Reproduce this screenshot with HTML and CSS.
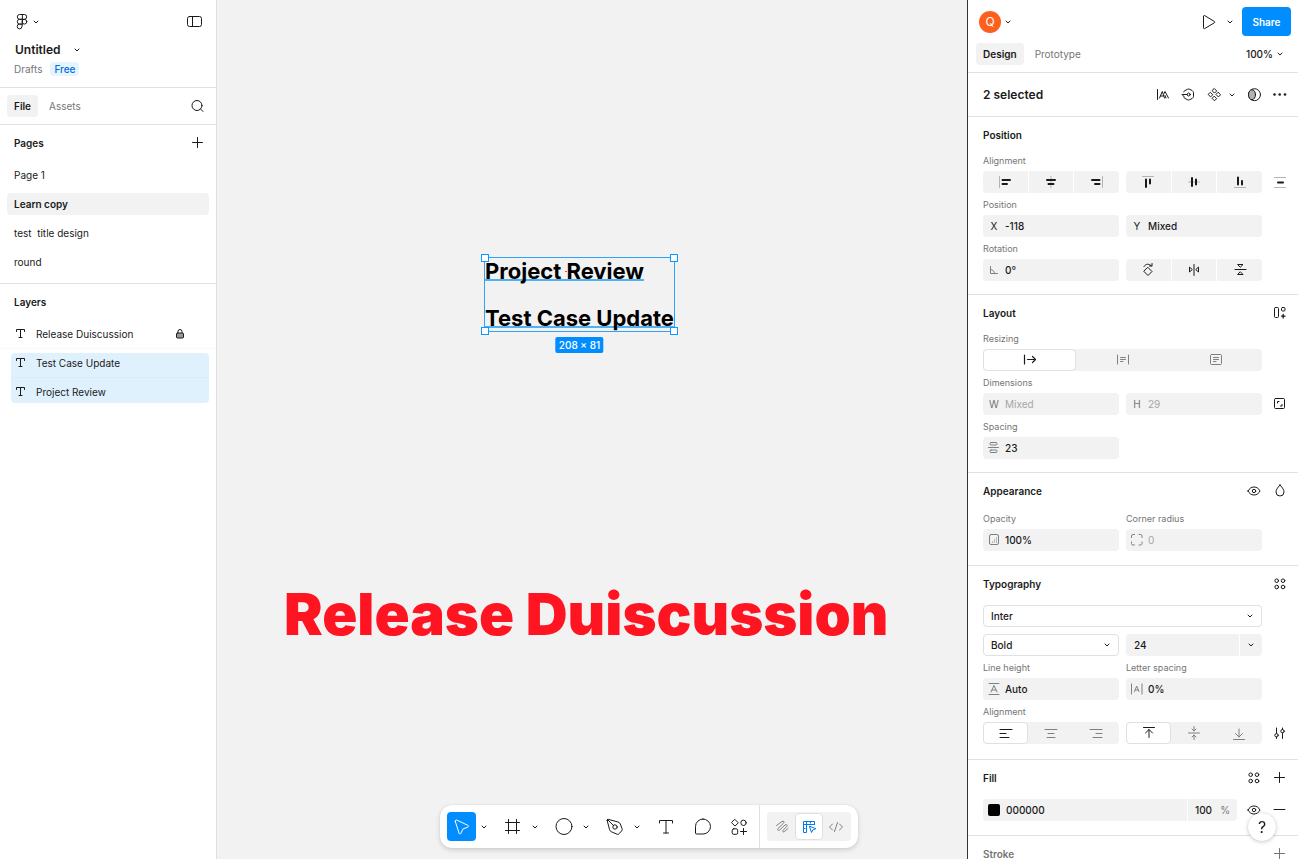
FILE: index.html
```html
<!DOCTYPE html>
<html lang="en">
<head>
  <meta charset="UTF-8" />
  <meta name="viewport" content="width=device-width, initial-scale=1.0" />
  <title>Untitled – Figma</title>
  <link rel="stylesheet" href="styles.css">
</head>
<body>
  <svg class="sprite" aria-hidden="true">
    <symbol id="chevron" viewBox="0 0 8 8"><path d="M2 3l2 2 2-2" stroke-width="1"/></symbol>
    <symbol id="plus" viewBox="0 0 20 20"><path d="M4.500 9.500h10M9.500 4.500v10"/></symbol>
    <symbol id="minus" viewBox="0 0 20 20"><path d="M4 9.500h11"/></symbol>
    <symbol id="eye" viewBox="0 0 20 20"><path d="M4 10c1.200-2.500 3.400-4 6-4s4.800 1.500 6 4c-1.200 2.500-3.400 4-6 4s-4.800-1.500-6-4z"/><circle cx="10" cy="10" r="1.700"/></symbol>
    <symbol id="dots4" viewBox="0 0 20 20"><circle cx="6.700" cy="6.700" r="1.800"/><circle cx="13" cy="6.700" r="1.800"/><circle cx="6.700" cy="13" r="1.800"/><circle cx="13" cy="13" r="1.800"/></symbol>
    <symbol id="text" viewBox="0 0 20 20"><path d="M6.500 7.500v-2h8v2M10.500 5.500v8M9 13.500h3"/></symbol>
  </svg>

  <div class="app">
    <aside class="left">
      <header class="file-head">
        <div class="bar">
          <button class="menu" aria-label="Main menu">
            <svg class="icon" viewBox="0 0 20 20"><path d="M10 2.500H7.700a2.400 2.400 0 0 0 0 4.800H10zM10 2.500h2.300a2.400 2.400 0 0 1 0 4.800H10M10 7.300H7.700a2.400 2.400 0 0 0 0 4.800H10zM10 12.100H7.700a2.400 2.400 0 1 0 2.300 2.400z"/><circle cx="12.400" cy="9.700" r="2.400"/></svg>
            <svg class="chev"><use href="#chevron"/></svg>
          </button>
          <button class="icon-btn" aria-label="Minimize UI">
            <svg class="icon" viewBox="0 0 20 20"><rect x="2.500" y="4.500" width="14" height="10" rx="2"/><path d="M7.500 4.500v10"/></svg>
          </button>
        </div>
        <button class="file-name">Untitled <svg class="chev"><use href="#chevron"/></svg></button>
        <div class="location"><a href="#">Drafts</a><span class="badge">Free</span></div>
      </header>

      <nav class="tabs left-tabs">
        <button class="tab active">File</button>
        <button class="tab">Assets</button>
        <button class="icon-btn push" aria-label="Search">
          <svg class="icon" viewBox="0 0 20 20"><circle cx="10" cy="9.500" r="5"/><path d="M13.600 13.100l2.400 2.400"/></svg>
        </button>
      </nav>

      <section class="pages">
        <div class="list-head">
          <h2>Pages</h2>
          <button class="icon-btn" aria-label="Add page"><svg class="icon"><use href="#plus"/></svg></button>
        </div>
        <ul class="page-list">
          <li>Page 1</li>
          <li class="current">Learn copy</li>
          <li>test&nbsp; title design</li>
          <li>round</li>
        </ul>
      </section>

      <section class="layers">
        <div class="list-head"><h2>Layers</h2></div>
        <ul class="layer-list">
          <li>
            <svg class="icon"><use href="#text"/></svg>Release Duiscussion
            <svg class="icon lock" viewBox="0 0 20 20"><path d="M8 9V7.500a2 2 0 0 1 4 0V9"/><rect x="6.500" y="9" width="7" height="5" rx="1" fill="#999"/></svg>
          </li>
          <li class="selected"><svg class="icon"><use href="#text"/></svg>Test Case Update</li>
          <li class="selected"><svg class="icon"><use href="#text"/></svg>Project Review</li>
        </ul>
      </section>
    </aside>

    <main class="canvas">
      <div class="selection">
        <p class="layer-text"><span>Project Review</span></p>
        <p class="layer-text"><span>Test Case Update</span></p>
        <i class="handle tl"></i><i class="handle tr"></i><i class="handle bl"></i><i class="handle br"></i>
        <span class="size">208 × 81</span>
      </div>
      <p class="headline">Release Duiscussion</p>
    </main>

    <aside class="right">
      <header class="right-head">
        <div class="bar">
          <button class="account" aria-label="Account">
            <span class="avatar">Q</span>
            <svg class="chev"><use href="#chevron"/></svg>
          </button>
          <button class="icon-btn push" aria-label="Present">
            <svg class="icon" viewBox="0 0 20 20"><path d="M4.500 4.300v11.600c0 .7.600 1 1.200.7l9.800-5.900c.5-.3.5-.9 0-1.200L5.700 3.600c-.6-.3-1.200 0-1.200.7z"/></svg>
          </button>
          <button class="chev-btn present-opt" aria-label="Present options"><svg class="chev"><use href="#chevron"/></svg></button>
          <button class="share">Share</button>
        </div>
        <div class="tabs">
          <button class="tab active">Design</button>
          <button class="tab">Prototype</button>
          <button class="zoom push">100% <svg class="chev"><use href="#chevron"/></svg></button>
        </div>
      </header>

      <div class="selected-bar">
        <h1>2 selected</h1>
        <button class="icon-btn" aria-label="Edit text">
          <svg class="icon" viewBox="0 0 20 20"><path d="M5.500 4.500v10M7.500 13l2.800-6.500 2.200 6.500M8.500 11h3M12 8.500l1-2 3.500 6.500M13 10.500l1 2.500"/></svg>
        </button>
        <button class="icon-btn" aria-label="Reset instance">
          <svg class="icon" viewBox="0 0 20 20"><path d="M5.500 7c.3-.6.800-1 1.300-1.300l2.500-1.400c.8-.4 1.700-.4 2.500 0l2.500 1.400c.8.500 1.200 1.200 1.200 2v3.600c0 .8-.4 1.500-1.200 2l-2.500 1.400c-.8.4-1.700.4-2.500 0l-2.500-1.400c-.5-.3-.9-.7-1.100-1.300M4.500 9.500h4.500M6 11.500l-2-2"/><circle cx="10.700" cy="9.500" r="1.500"/></svg>
        </button>
        <div class="split">
          <button class="icon-btn" aria-label="Create component">
            <svg class="icon" viewBox="0 0 20 20"><path d="M10.500 3.700l2.200 2.200-2.200 2.200-2.200-2.200zM6.600 7.500l2.200 2.200-2.200 2.200-2.200-2.200zM14.400 7.500l2.200 2.200-2.200 2.200-2.200-2.200zM10.500 11.400l2.200 2.200-2.200 2.200-2.200-2.200z"/></svg>
          </button>
          <button class="chev-btn" aria-label="Component options"><svg class="chev"><use href="#chevron"/></svg></button>
        </div>
        <button class="icon-btn" aria-label="Use as mask">
          <svg class="icon" viewBox="0 0 20 20"><circle cx="10.500" cy="9.700" r="6"/><ellipse cx="8" cy="9.700" rx="3.500" ry="5" fill="#b3b3b3"/></svg>
        </button>
        <button class="icon-btn" aria-label="More">
          <svg class="icon solid" viewBox="0 0 20 20"><circle cx="4.500" cy="9.500" r="1.300"/><circle cx="9.700" cy="9.500" r="1.300"/><circle cx="15" cy="9.500" r="1.300"/></svg>
        </button>
      </div>

      <section class="panel compact">
        <div class="panel-head"><h2>Position</h2></div>
        <div class="grid">
          <div class="group">
            <span class="caption">Alignment</span>
            <div class="btn-group">
              <button aria-label="Align left"><svg class="icon thick" viewBox="0 0 20 20"><path class="faint" d="M4.500 4.500v11"/><path d="M7.500 8H15M7.500 12H12"/></svg></button>
              <button aria-label="Align horizontal centers"><svg class="icon thick" viewBox="0 0 20 20"><path class="faint" d="M10 4.500v11"/><path d="M6 8h8M7.500 12h5"/></svg></button>
              <button aria-label="Align right"><svg class="icon thick" viewBox="0 0 20 20"><path class="faint" d="M15.500 4.500v11"/><path d="M5 8h7.500M8 12h4.500"/></svg></button>
            </div>
          </div>
          <div class="group">
            <div class="btn-group">
              <button aria-label="Align top"><svg class="icon thick" viewBox="0 0 20 20"><path class="faint" d="M4.500 4.500h11"/><path d="M8 7.500v7.500M12 7.500v4"/></svg></button>
              <button aria-label="Align vertical centers"><svg class="icon thick" viewBox="0 0 20 20"><path class="faint" d="M4.500 10h11"/><path d="M8 6v8M12 7.500v5"/></svg></button>
              <button aria-label="Align bottom"><svg class="icon thick" viewBox="0 0 20 20"><path class="faint" d="M4.500 15.500h11"/><path d="M8 5.500v7M12 9v3.500"/></svg></button>
            </div>
          </div>
          <button class="icon-btn" aria-label="Distribute">
            <svg class="icon thick" viewBox="0 0 20 20"><path class="faint" d="M4.500 5.500h11M4.500 15.500h11"/><path d="M8 10.500h5"/></svg>
          </button>

          <div class="group">
            <label class="caption" for="x">Position</label>
            <div class="field"><span class="prefix">X</span><input id="x" type="text" value="-118"></div>
          </div>
          <div class="group">
            <div class="field"><span class="prefix">Y</span><input aria-label="Y position" type="text" value="Mixed"></div>
          </div>
          <span></span>

          <div class="group">
            <label class="caption" for="rotation">Rotation</label>
            <div class="field">
              <svg class="icon muted" viewBox="0 0 20 20"><path d="M6.500 6.500v7h7M6.500 9.500c2.200 0 4 1.800 4 4"/></svg>
              <input id="rotation" type="text" value="0°">
            </div>
          </div>
          <div class="group">
            <div class="btn-group">
              <button aria-label="Rotate 90° right"><svg class="icon" viewBox="0 0 20 20"><path d="M10 7.500l4 4-4 4-4-4zM6 6.500c1.500-3 5.500-3 7.500-.5M14 3.500V6h-2.500"/></svg></button>
              <button aria-label="Flip horizontal"><svg class="icon" viewBox="0 0 20 20"><path d="M10 4.500v11M5.500 7.500v4.500L8 9.800zM14.500 7.500v4.500L12 9.800z"/></svg></button>
              <button aria-label="Flip vertical"><svg class="icon" viewBox="0 0 20 20"><path d="M5 9.500h11M8 4.500h5L10.500 7zM8 14.500h5L10.500 12z"/></svg></button>
            </div>
          </div>
        </div>
      </section>

      <section class="panel compact">
        <div class="panel-head">
          <h2>Layout</h2>
          <button class="icon-btn" aria-label="Use auto layout">
            <svg class="icon" viewBox="0 0 20 20"><rect x="4.500" y="4.500" width="4" height="10" rx="1"/><rect x="11.500" y="4.500" width="3.500" height="3.500" rx="1"/><path d="M13.200 11.500v3.500M11.500 13.200H15" stroke-width="1.300"/></svg>
          </button>
        </div>
        <div class="grid">
          <div class="group span2">
            <span class="caption">Resizing</span>
            <div class="segments">
              <label><input type="radio" name="resize" aria-label="Auto width" checked><svg class="icon" viewBox="0 0 20 20"><path d="M4.500 5v9M7.500 9.500h8M12.500 6.500l3 3-3 3" stroke-width="1.200"/></svg></label>
              <label><input type="radio" name="resize" aria-label="Auto height"><svg class="icon" viewBox="0 0 20 20"><path d="M4.500 5v9M15.500 5v9M7.500 7.500h5M7.500 9.500h5M7.500 11.500H10"/></svg></label>
              <label><input type="radio" name="resize" aria-label="Fixed size"><svg class="icon" viewBox="0 0 20 20"><rect x="4.500" y="4.500" width="11" height="10" rx="1"/><path d="M7.500 7.500h5M7.500 9.500h5M7.500 11.500H10"/></svg></label>
            </div>
          </div>
          <span></span>

          <div class="group">
            <label class="caption" for="width">Dimensions</label>
            <div class="field off"><span class="prefix">W</span><input id="width" type="text" value="Mixed"></div>
          </div>
          <div class="group">
            <div class="field off"><span class="prefix">H</span><input aria-label="Height" type="text" value="29"></div>
          </div>
          <button class="icon-btn" aria-label="Lock aspect ratio">
            <svg class="icon" viewBox="0 0 20 20"><rect x="4.500" y="4.500" width="10" height="10" rx="1"/><path d="M7.500 9V7.500H9M12 10.500V12h-1.500"/></svg>
          </button>

          <div class="group">
            <label class="caption" for="spacing">Spacing</label>
            <div class="field">
              <svg class="icon muted" viewBox="0 0 20 20"><path d="M4.500 9.500h10"/><rect x="6" y="4.500" width="7" height="2.500" rx="1"/><rect x="6" y="12" width="7" height="2.500" rx="1"/></svg>
              <input id="spacing" type="text" value="23">
            </div>
          </div>
        </div>
      </section>

      <section class="panel appearance">
        <div class="panel-head">
          <h2>Appearance</h2>
          <button class="icon-btn" aria-label="Toggle visibility"><svg class="icon"><use href="#eye"/></svg></button>
          <button class="icon-btn" aria-label="Blend mode">
            <svg class="icon" viewBox="0 0 20 20"><path d="M10 4c2.500 2.800 4 4.900 4 7a4 4 0 0 1-8 0c0-2.100 1.500-4.200 4-7z"/></svg>
          </button>
        </div>
        <div class="grid">
          <div class="group">
            <label class="caption" for="opacity">Opacity</label>
            <div class="field">
              <svg class="icon muted" viewBox="0 0 20 20"><rect x="5.500" y="4.500" width="9" height="10" rx="1.500"/><path d="M12.500 7.500v5M10.500 9.500v3M8.500 11.500v1" stroke-dasharray="1 1" stroke-linecap="butt"/></svg>
              <input id="opacity" type="text" value="100%">
            </div>
          </div>
          <div class="group">
            <label class="caption" for="radius">Corner radius</label>
            <div class="field off">
              <svg class="icon muted" viewBox="0 0 20 20"><path d="M4.500 7.500V6A1.500 1.500 0 0 1 6 4.500H7.500M12 4.500h1.500A1.500 1.500 0 0 1 15 6V7.500M15 12v1.500a1.500 1.500 0 0 1-1.500 1.500H12M7.500 15H6A1.500 1.500 0 0 1 4.500 13.500V12"/></svg>
              <input id="radius" type="text" value="0">
            </div>
          </div>
        </div>
      </section>

      <section class="panel typography">
        <div class="panel-head">
          <h2>Typography</h2>
          <button class="icon-btn" aria-label="Apply text styles"><svg class="icon"><use href="#dots4"/></svg></button>
        </div>
        <div class="grid">
          <div class="select span2">
            <select aria-label="Font family"><option>Inter</option></select>
            <svg class="chev"><use href="#chevron"/></svg>
          </div>
          <span></span>
          <div class="select">
            <select aria-label="Font style"><option>Bold</option></select>
            <svg class="chev"><use href="#chevron"/></svg>
          </div>
          <div class="combo">
            <div class="field"><input aria-label="Font size" type="text" value="24"></div>
            <button class="chev-btn" aria-label="Font sizes"><svg class="chev"><use href="#chevron"/></svg></button>
          </div>
          <span></span>

          <div class="group">
            <label class="caption" for="line-height">Line height</label>
            <div class="field">
              <svg class="icon muted" viewBox="0 0 20 20"><path d="M5 4.500h10M5 15.500h10M7 13l3-6.500 3 6.500M8 11h4"/></svg>
              <input id="line-height" type="text" value="Auto">
            </div>
          </div>
          <div class="group">
            <label class="caption" for="letter-spacing">Letter spacing</label>
            <div class="field">
              <svg class="icon muted" viewBox="0 0 20 20"><path d="M4.500 5v10M15 5v10M7.500 12.500l2.200-5.500 2.300 5.500M8.500 11h2.500"/></svg>
              <input id="letter-spacing" type="text" value="0%">
            </div>
          </div>
          <span></span>

          <div class="group">
            <span class="caption">Alignment</span>
            <div class="segments">
              <label><input type="radio" name="halign" aria-label="Text align left" checked><svg class="icon" viewBox="0 0 20 20"><path d="M4 6.500h12M4 10.500h6M4 14.500h9"/></svg></label>
              <label><input type="radio" name="halign" aria-label="Text align center"><svg class="icon" viewBox="0 0 20 20"><path d="M4 6.500h12M7 10.500h6M6 14.500h8"/></svg></label>
              <label><input type="radio" name="halign" aria-label="Text align right"><svg class="icon" viewBox="0 0 20 20"><path d="M4 6.500h12M10 10.500h6M7 14.500h9"/></svg></label>
            </div>
          </div>
          <div class="group">
            <div class="segments">
              <label><input type="radio" name="valign" aria-label="Align top" checked><svg class="icon" viewBox="0 0 20 20"><path d="M4.500 4.500h11M10 14.500V6.500M6.500 10L10 6.500l3.500 3.500"/></svg></label>
              <label><input type="radio" name="valign" aria-label="Align middle"><svg class="icon" viewBox="0 0 20 20"><path d="M4.500 10h11M10 3.500v4.500M8 6l2 2 2-2M10 16.500V12M8 14l2-2 2 2"/></svg></label>
              <label><input type="radio" name="valign" aria-label="Align bottom"><svg class="icon" viewBox="0 0 20 20"><path d="M4.500 16.500h11M10 6v8M6.500 10.500L10 14l3.500-3.500"/></svg></label>
            </div>
          </div>
          <button class="icon-btn" aria-label="Type settings">
            <svg class="icon" viewBox="0 0 20 20"><path d="M6.500 5v5.500M6.500 14v1.500M12.500 15.500v-5.500M12.500 6.500V5"/><circle cx="6.500" cy="12.300" r="1.700"/><circle cx="12.500" cy="8.200" r="1.700"/></svg>
          </button>
        </div>
      </section>

      <section class="panel">
        <div class="panel-head">
          <h2>Fill</h2>
          <button class="icon-btn" aria-label="Apply styles"><svg class="icon"><use href="#dots4"/></svg></button>
          <button class="icon-btn" aria-label="Add fill"><svg class="icon"><use href="#plus"/></svg></button>
        </div>
        <div class="fill-row">
          <div class="combo">
            <div class="field"><span class="swatch"></span><input aria-label="Fill color" type="text" value="000000"></div>
            <div class="field percent"><input aria-label="Fill opacity" type="text" value="100"><span>%</span></div>
          </div>
          <button class="icon-btn" aria-label="Toggle fill"><svg class="icon"><use href="#eye"/></svg></button>
          <button class="icon-btn" aria-label="Remove fill"><svg class="icon"><use href="#minus"/></svg></button>
        </div>
      </section>

      <section class="panel empty">
        <div class="panel-head">
          <h2>Stroke</h2>
          <button class="icon-btn" aria-label="Add stroke"><svg class="icon"><use href="#plus"/></svg></button>
        </div>
      </section>
    </aside>
  </div>

  <div class="toolbar">
    <div class="tools">
      <div class="split">
        <button class="tool on" aria-label="Move"><svg class="tool-icon" viewBox="0 0 24 24"><path d="M5.300 6.500l3.900 12c.3.800 1.300.8 1.600.1l2.100-4.600 5-1.900c.8-.3.900-1.300.1-1.700L6.600 5c-.8-.4-1.600.5-1.300 1.500z"/></svg></button>
        <button class="chev-btn" aria-label="Move tools"><svg class="chev"><use href="#chevron"/></svg></button>
      </div>
      <div class="split">
        <button class="tool" aria-label="Frame"><svg class="tool-icon" viewBox="0 0 24 24"><path d="M7.500 4.500v14M15.500 4.500v14M4.500 7.500h14M4.500 15.500h14"/></svg></button>
        <button class="chev-btn" aria-label="Region tools"><svg class="chev"><use href="#chevron"/></svg></button>
      </div>
      <div class="split">
        <button class="tool" aria-label="Ellipse"><svg class="tool-icon" viewBox="0 0 24 24"><circle cx="12" cy="11.500" r="8"/></svg></button>
        <button class="chev-btn" aria-label="Shape tools"><svg class="chev"><use href="#chevron"/></svg></button>
      </div>
      <div class="split">
        <button class="tool" aria-label="Pen"><svg class="tool-icon" viewBox="0 0 24 24"><path d="M4.200 5.500l2.300 9c.3 1.200 1 2 2.200 2.400l5.300 2.300c1 .4 1.500.2 2-.4l2.700-3c.6-.7.700-1.200.4-2l-1.800-4.800c-.4-1-1.200-1.700-2.300-2L5.200 4.300c-.8-.2-1.200.4-1 1.200zM4.500 4.500l6 6"/><circle cx="12" cy="12" r="2.200"/></svg></button>
        <button class="chev-btn" aria-label="Drawing tools"><svg class="chev"><use href="#chevron"/></svg></button>
      </div>
      <button class="tool" aria-label="Text"><svg class="tool-icon" viewBox="0 0 24 24"><path d="M5.500 8V5.500h13V8M12 5.500v12.500M9.500 18h5"/></svg></button>
      <button class="tool" aria-label="Comment"><svg class="tool-icon" viewBox="0 0 24 24"><path d="M13 4a7.500 7.500 0 1 1 0 15H6.500a1 1 0 0 1-1-1v-6.500A7.500 7.500 0 0 1 13 4z"/></svg></button>
      <button class="tool" aria-label="Actions"><svg class="tool-icon" viewBox="0 0 24 24"><path d="M9 4.500l3.300 3.300L9 11.100 5.700 7.800zM17.500 13.500v6M14.500 16.500h6"/><circle cx="17.500" cy="7.800" r="2.700"/><rect x="6.200" y="13.800" width="5.500" height="5.500" rx="1.500"/></svg></button>
    </div>
    <div class="modes">
      <div class="mode-group">
        <label><input type="radio" name="mode" aria-label="Draw"><svg class="icon" viewBox="0 0 20 20"><path d="M4.500 8.500l5.500-4c1.700-1 2.800.5 1.500 1.700L6 11.500c-1.200 1.400.3 2.600 1.700 1.400L13 8c1.500-1.200 2.800.3 1.700 1.600L11 13.300c-1 1.300.3 2.200 1.500 1.200l3.500-3"/></svg></label>
        <label><input type="radio" name="mode" aria-label="Design" checked><svg class="icon" viewBox="0 0 20 20"><path d="M15.500 7.500V4.500h-11v11h3v-8h8M4.500 7.500h3v-3M4.500 11.500H6M11.500 4.500V6"/><path d="M10.500 9.500l2 6 1.300-2.600 2.700-1.100z"/></svg></label>
        <label><input type="radio" name="mode" aria-label="Dev Mode"><svg class="icon" viewBox="0 0 20 20"><path d="M6.500 7l-3 3 3 3M13.500 7l3 3-3 3M11.500 5.500l-3 9"/></svg></label>
      </div>
    </div>
  </div>

  <button class="help" aria-label="Help">?</button>
</body>
</html>
```
FILE: styles.css
```css
* {
  box-sizing: border-box;
}

body {
  margin: 0;
  font-family: Inter, "Liberation Sans", sans-serif;
  font-size: 10px;
  line-height: 14px;
  color: #1a1a1a;
  background: #f2f2f2;
  overflow: hidden;
}

h1, h2, p, ul {
  margin: 0;
  padding: 0;
}

h1 {
  font-size: 12px;
  font-weight: 600;
}

h2 {
  font-size: 10px;
  font-weight: 600;
}

ul {
  list-style: none;
}

button, input, select {
  margin: 0;
  padding: 0;
  border: none;
  background: none;
  font: inherit;
  color: inherit;
}

a {
  color: inherit;
  text-decoration: none;
}

.sprite {
  position: absolute;
  width: 0;
  height: 0;
}

svg {
  flex: none;
  fill: none;
  stroke: currentColor;
  stroke-width: 1;
  stroke-linecap: round;
  stroke-linejoin: round;
}

.icon {
  width: 20px;
  height: 20px;
}

.tool-icon {
  width: 24px;
  height: 24px;
}

.chev {
  width: 8px;
  height: 8px;
}

.solid {
  fill: currentColor;
  stroke: none;
}

.thick {
  stroke-width: 2;
}

.faint {
  stroke: #b3b3b3;
  stroke-width: 1;
}

.muted {
  color: #808080;
}

.app {
  display: grid;
  grid-template-columns: 217px 1fr 331px;
  height: 100vh;
}

.icon-btn, .chev-btn, .tool {
  display: flex;
  align-items: center;
  justify-content: center;
  flex: none;
}

.icon-btn {
  width: 22px;
  height: 22px;
}

.chev-btn {
  width: 14px;
  height: 22px;
}

.push {
  margin-left: auto;
}

.split {
  display: flex;
  align-items: center;
}

.bar, .tabs {
  display: flex;
  align-items: center;
}

.tabs {
  gap: 4px;
}

.tab {
  height: 22px;
  padding: 0 7px;
  border-radius: 4px;
  color: #757575;
}

.tab.active {
  background: #f2f2f2;
  color: #1a1a1a;
  font-weight: 600;
}

/* left sidebar */
.left {
  background: #fff;
  border-right: 1px solid #e0e0e0;
}

.file-head {
  height: 88px;
  padding: 7px 10px 0 12px;
  border-bottom: 1px solid #e0e0e0;
}

.file-head .bar {
  justify-content: space-between;
  height: 29px;
}

.menu {
  display: flex;
  align-items: center;
}

.file-name {
  display: flex;
  align-items: center;
  gap: 12px;
  height: 26px;
  padding: 2px 0 0 3px;
  font-size: 12px;
  font-weight: 600;
}

.location {
  display: flex;
  align-items: center;
  gap: 8px;
  padding-left: 2px;
  color: #757575;
}

.badge {
  padding: 0 4px;
  border-radius: 4px;
  background: #e5f4ff;
  color: #006fdb;
  font-weight: 500;
}

.left-tabs {
  height: 37px;
  padding: 0 8px 0 7px;
  border-bottom: 1px solid #e0e0e0;
}

.list-head {
  display: flex;
  align-items: center;
  justify-content: space-between;
  height: 36px;
  padding: 0 7px 0 14px;
}

.pages {
  padding-bottom: 10px;
  border-bottom: 1px solid #e0e0e0;
}

.page-list {
  display: grid;
  gap: 7px;
  padding: 3px 7px 0;
}

.page-list li {
  padding: 0 7px;
  border-radius: 4px;
  line-height: 22px;
}

.page-list .current {
  background: #f2f2f2;
  font-weight: 600;
}

.layer-list li {
  display: flex;
  align-items: center;
  gap: 6px;
  height: 29px;
  padding: 0 26px 0 10px;
  border-bottom: 1px solid #fafafa;
}

.layer-list .selected {
  height: 25px;
  margin: 4px 7px 0 11px;
  padding: 0 0 4px;
  border-bottom-color: #d8ecfb;
  border-radius: 4px 4px 0 0;
  background: #e0f1fe;
}

.layer-list .selected + .selected {
  margin-top: 0;
  padding: 3px 0 0;
  border: none;
  border-radius: 0 0 4px 4px;
}

.layer-list .selected .icon {
  margin-left: -1px;
}

.layer-list .lock {
  margin-left: auto;
}

/* canvas */
.canvas {
  position: relative;
  overflow: hidden;
}

.selection {
  position: absolute;
  top: 258px;
  left: 268px;
  display: grid;
  gap: 21px;
  color: #000;
  outline: 1px solid #2ea4f8;
}

.layer-text {
  font-size: 22px;
  font-weight: 700;
  line-height: 26px;
  white-space: nowrap;
}

.layer-text span {
  position: relative;
  text-decoration: underline 2px #4fb0f5;
  text-decoration-skip-ink: none;
  text-underline-offset: 0;
}

/* center mark of the layer */
.layer-text span::after {
  content: "";
  position: absolute;
  top: 50%;
  left: 50%;
  width: 2px;
  height: 1px;
  background: #ff24bd;
}

.handle {
  position: absolute;
  width: 8px;
  height: 8px;
  border: 1px solid #0d99ff;
  background: #fff;
}

.tl { top: -4px; left: -4px; }
.tr { top: -4px; right: -4px; }
.bl { bottom: -4px; left: -4px; }
.br { bottom: -4px; right: -4px; }

.size {
  position: absolute;
  top: 79px;
  left: 50%;
  padding: 1px 3px;
  border-radius: 2px;
  background: #008dff;
  color: #fff;
  font-weight: 500;
  white-space: nowrap;
  transform: translateX(-50%);
}

.headline {
  position: absolute;
  top: 579px;
  left: 67px;
  font-size: 58px;
  font-weight: 900;
  line-height: 70px;
  color: #ff1421;
  white-space: nowrap;
}

/* right sidebar */
.right {
  height: 100vh;
  overflow: hidden;
  background: #fff;
  border-left: 1px solid #333;
}

.right-head {
  height: 73px;
  padding: 7px 7px 0 8px;
  border-bottom: 1px solid #e0e0e0;
}

.right-head .bar {
  height: 29px;
  padding-left: 3px;
}

.right-head .tabs {
  height: 36px;
}

.account {
  display: flex;
  align-items: center;
  gap: 3px;
}

.avatar {
  width: 22px;
  height: 22px;
  border-radius: 50%;
  background: #fc601c;
  color: #fff;
  font-size: 12px;
  line-height: 22px;
}

.present-opt {
  margin: 0 5px 0 3px;
}

.share {
  width: 49px;
  height: 29px;
  border-radius: 4px;
  background: #008dff;
  color: #fff;
  font-weight: 600;
}

.zoom {
  display: flex;
  align-items: center;
  gap: 3px;
  padding-right: 7px;
  font-weight: 500;
}

.selected-bar {
  display: flex;
  align-items: center;
  gap: 4px;
  height: 44px;
  padding: 0 7px 0 15px;
  border-bottom: 1px solid #e0e0e0;
}

.selected-bar h1 {
  margin-right: auto;
}

.panel {
  padding: 0 7px 14px 15px;
  border-bottom: 1px solid #e0e0e0;
}

.compact {
  padding-bottom: 13px;
}

.typography {
  padding-bottom: 15px;
}

.panel-head {
  display: flex;
  align-items: center;
  gap: 4px;
  height: 36px;
  margin-bottom: 3px;
}

.panel-head h2 {
  margin-right: auto;
}

.appearance .panel-head {
  margin-bottom: 5px;
}

.empty {
  color: #757575;
}

.grid {
  display: grid;
  grid-template-columns: minmax(0, 1fr) minmax(0, 1fr) 22px;
  gap: 7px;
  align-items: end;
}

.span2 {
  grid-column: span 2;
}

.caption {
  display: block;
  margin-bottom: 5px;
  font-size: 9px;
  line-height: 10px;
  color: #757575;
}

.field {
  display: flex;
  align-items: center;
  height: 22px;
  border-radius: 4px;
  background: #f2f2f2;
}

.field .icon {
  margin: 0 1px;
}

.field input {
  flex: 1;
  width: 100%;
  min-width: 0;
  height: 22px;
  font-weight: 500;
}

.prefix {
  flex: none;
  width: 22px;
  text-align: center;
}

.field.off {
  color: #757575;
}

.field.off input {
  color: #a6a6a6;
  font-weight: 400;
}

.btn-group {
  display: grid;
  grid-template-columns: repeat(3, 1fr);
  gap: 1px;
  height: 22px;
  border-radius: 4px;
  overflow: hidden;
}

.btn-group button {
  display: flex;
  align-items: center;
  justify-content: center;
  background: #f2f2f2;
}

.segments {
  display: grid;
  grid-template-columns: repeat(3, 1fr);
  height: 22px;
  border-radius: 4px;
  background: #f2f2f2;
}

.segments label, .mode-group label {
  position: relative;
  display: flex;
  align-items: center;
  justify-content: center;
  border: 1px solid transparent;
  border-radius: 4px;
  color: #808080;
}

.segments input, .mode-group input {
  position: absolute;
  inset: 0;
  opacity: 0;
}

.segments label:has(:checked) {
  border-color: #e0e0e0;
  background: #fff;
  color: #1a1a1a;
}

.select {
  position: relative;
}

.select select {
  display: block;
  width: 100%;
  height: 22px;
  padding: 0 7px;
  border: 1px solid #e0e0e0;
  border-radius: 4px;
  font-weight: 500;
  appearance: none;
}

.select .chev {
  position: absolute;
  top: 7px;
  right: 8px;
  pointer-events: none;
}

.combo {
  display: flex;
  flex: 1;
  gap: 1px;
  border-radius: 4px;
  overflow: hidden;
}

.combo .field {
  flex: 1;
  border-radius: 0;
}

.combo .chev-btn {
  width: 22px;
  background: #f2f2f2;
}

.grid .combo input {
  padding-left: 8px;
}

.fill-row {
  display: flex;
  gap: 4px;
}

.fill-row .combo {
  margin-right: 2px;
}

.swatch {
  flex: none;
  width: 12px;
  height: 12px;
  margin: 0 6px 0 5px;
  border-radius: 2px;
  background: #000;
}

.combo .percent {
  flex: none;
  width: 49px;
  padding: 0 7px;
  color: #757575;
}

.percent input {
  color: #1a1a1a;
}

/* bottom toolbar */
.toolbar {
  position: fixed;
  bottom: 11px;
  left: 50%;
  display: flex;
  border-radius: 12px;
  background: #fff;
  box-shadow: 0 0 1px rgba(0, 0, 0, 0.2), 0 2px 5px rgba(0, 0, 0, 0.15);
  transform: translateX(-50%);
}

.tools {
  display: flex;
  gap: 7px;
  padding: 7px;
}

.tool {
  width: 29px;
  height: 29px;
  border-radius: 4px;
}

.tool.on {
  background: #008dff;
  color: #fff;
}

.tools .chev-btn {
  width: 15px;
}

.modes {
  padding: 7px;
  border-left: 1px solid #e0e0e0;
}

.mode-group {
  display: grid;
  grid-template-columns: repeat(3, 1fr);
  width: 84px;
  height: 29px;
  padding: 1px;
  border-radius: 4px;
  background: #f2f2f2;
}

.mode-group label:has(:checked) {
  border-color: #e0e0e0;
  background: #fff;
  color: #007be5;
}

.help {
  position: fixed;
  right: 22px;
  bottom: 18px;
  width: 28px;
  height: 28px;
  border-radius: 50%;
  background: #fff;
  box-shadow: 0 0 1px rgba(0, 0, 0, 0.2), 0 1px 4px rgba(0, 0, 0, 0.2);
  font-size: 16px;
  font-weight: 400;
}
```
